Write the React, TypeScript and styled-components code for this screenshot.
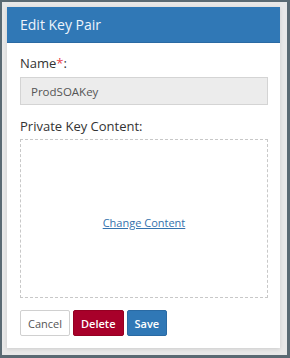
import React from 'react'
import styled, { createGlobalStyle } from 'styled-components'

const GlobalStyle = createGlobalStyle`
  html, body {
    margin: 0;
    padding: 0;
    background: #5a6a73;
  }
  body {
    padding: 2px 3px 3px 2px;
    font-family: 'Open Sans', 'Liberation Sans', sans-serif;
  }
`

const Frame = styled.div`
  background: #e8e8e8;
  padding: 5px 7px 7px 5px;
  width: 285px;
  height: 353px;
  box-sizing: border-box;
`

const Card = styled.div`
  background: #fff;
  height: 100%;
  display: flex;
  flex-direction: column;
  box-shadow: 0 1px 4px rgba(0, 0, 0, 0.12);
`

const Header = styled.div`
  background: #3078b6;
  color: #eef4fb;
  height: 36px;
  display: flex;
  align-items: center;
  padding: 0 13px;
  font-size: 14px;
  border-bottom: 1px solid #2a6aa3;
  box-sizing: border-box;
`

const Body = styled.div`
  flex: 1;
  display: flex;
  flex-direction: column;
  padding: 10px 12px 12px 13px;
`

const Label = styled.div<{ $gap?: number }>`
  font-size: 13px;
  line-height: 20px;
  color: #333;
  margin-top: ${(p) => p.$gap ?? 0}px;
`

const Required = styled.span`
  color: #e8414a;
`

const Input = styled.div`
  margin-top: 4px;
  height: 28px;
  box-sizing: border-box;
  border: 1px solid #d4d4d4;
  background: #ececec;
  color: #555;
  font-size: 11.5px;
  padding: 0 10px;
  display: flex;
  align-items: center;
`

const DropZone = styled.div`
  margin-top: 3px;
  height: 159px;
  box-sizing: border-box;
  border: 1px dashed #c8c8c8;
  display: flex;
  align-items: center;
  justify-content: center;
  padding-top: 7px;
`

const Link = styled.a`
  color: #3572ad;
  font-size: 11px;
  text-decoration: underline;
  cursor: pointer;
`

const Actions = styled.div`
  margin-top: 12px;
  display: flex;
  gap: 3px;
`

const Button = styled.button<{ $variant?: 'default' | 'danger' | 'primary' }>`
  height: 26px;
  padding: 0 7px;
  border-radius: 2px;
  font-family: inherit;
  font-size: 11px;
  font-weight: ${(p) => (p.$variant ? 600 : 400)};
  border: 1px solid
    ${(p) =>
      p.$variant === 'danger' ? '#950022' : p.$variant === 'primary' ? '#2a6aa3' : '#d0d0d0'};
  background: ${(p) =>
    p.$variant === 'danger' ? '#a8002a' : p.$variant === 'primary' ? '#3078b6' : '#fff'};
  color: ${(p) => (p.$variant ? '#fff' : '#555')};
  cursor: pointer;
`

export default function App() {
  return (
    <>
      <GlobalStyle />
      <Frame>
        <Card>
          <Header>Edit Key Pair</Header>
          <Body>
            <Label>
              Name<Required>*</Required>:
            </Label>
            <Input>ProdSOAKey</Input>
            <Label $gap={11}>Private Key Content:</Label>
            <DropZone>
              <Link>Change Content</Link>
            </DropZone>
            <Actions>
              <Button>Cancel</Button>
              <Button $variant='danger'>Delete</Button>
              <Button $variant='primary'>Save</Button>
            </Actions>
          </Body>
        </Card>
      </Frame>
    </>
  )
}
